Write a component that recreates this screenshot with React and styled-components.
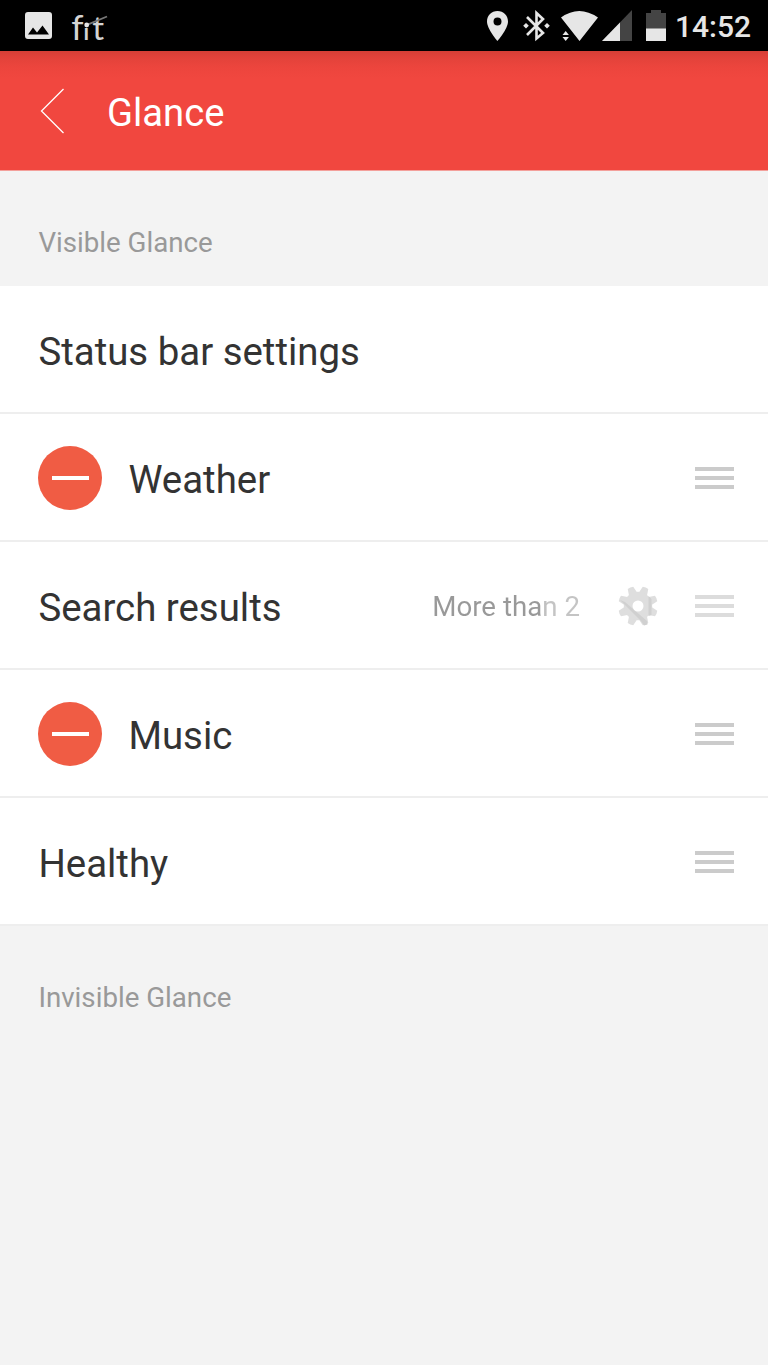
import React from "react";
import styled, { createGlobalStyle } from "styled-components";

const GlobalStyle = createGlobalStyle`
  body { margin: 0; background: #f3f3f3; font-family: Roboto, "Liberation Sans", sans-serif; }
  svg { display: block; flex: none; }
`;

const Screen = styled.main`
  min-height: 1365px;
  background: #f3f3f3;
`;

const StatusBar = styled.header`
  display: flex;
  align-items: center;
  justify-content: space-between;
  height: 51px;
  background: #000;
`;

const Clock = styled.time`
  width: 75px;
  padding-top: 1px;
  margin-left: 8px;
  margin-right: 18px;
  font-size: 30px;
  font-weight: 500;
  line-height: 51px;
  color: #e6e6e6;
  white-space: nowrap;
`;

const StatusGroup = styled.div`
  display: flex;
`;

const TitleBar = styled.div`
  display: flex;
  align-items: center;
  height: 120px;
  padding-left: 38px;
  background: linear-gradient(#d63f36 0, #e2423a 6px, #ec453d 16px, #f1473f 28px);
  border-bottom: 1px solid #f3a09b;
  box-sizing: border-box;
`;

const Title = styled.h1`
  margin: 5px 0 0 41px;
  font-size: 38.2px;
  font-weight: 400;
  line-height: 45px;
  color: #fff;
`;

const SectionLabel = styled.h2`
  margin: 0;
  padding: ${(p) => p.$top}px 38.4px 0;
  height: ${(p) => p.$height}px;
  box-sizing: border-box;
  font-size: 27.7px;
  font-weight: 400;
  line-height: 34px;
  color: #999;
`;

const List = styled.ul`
  margin: 0;
  padding: 0;
  list-style: none;
`;

const Row = styled.li`
  display: flex;
  align-items: center;
  height: 128px;
  padding: 2px 34px 0 38.4px;
  box-sizing: border-box;
  background: #fff;
  border-bottom: 2px solid #eee;
`;

const RowLabel = styled.span`
  flex: 1;
  padding-top: 3px;
  font-size: 38.4px;
  line-height: 46px;
  color: #333;
`;

const RemoveButton = styled.span`
  display: flex;
  align-items: center;
  justify-content: center;
  width: 64px;
  height: 64px;
  margin-right: 26px;
  border-radius: 50%;
  background: #f05c44;

  &::before {
    content: "";
    width: 37px;
    height: 4px;
    background: #fff;
  }
`;

const RowValue = styled.span`
  padding-top: 2px;
  margin-right: 38px;
  font-size: 27.7px;
  line-height: 34px;
  color: transparent;
  background: linear-gradient(90deg, #999 0 108px, #c4c4c4 114px);
  background-clip: text;
`;

const Handle = styled.span`
  display: grid;
  gap: 5px;
  width: 39px;
  margin-left: ${(p) => (p.$afterIcon ? 37 : 0)}px;

  i {
    height: 4px;
    background: ${(p) => (p.$faded ? "#dcdcdc" : "#cbcbcb")};
  }
`;

const DragHandle = (props) => (
  <Handle {...props}><i /><i /><i /></Handle>
);

const NotificationIcons = () => (
  <svg width="120" height="51" viewBox="0 0 120 51">
    <path fill="#e6e6e6" fillRule="evenodd" d="M28 12h21a3 3 0 0 1 3 3v21a3 3 0 0 1-3 3H28a3 3 0 0 1-3-3V15a3 3 0 0 1 3-3Zm0 22.500h21l-6.500-9-5.500 7-4-5Z" />
    <g fontFamily="Lato, sans-serif" fill="#d4d4d4">
      <text x="71.300" y="39.800" fontSize="35">f</text>
      <text x="83.500" y="39.800" fontSize="22" fontWeight="700">ı</text>
      <text x="92.300" y="39.800" fontSize="33">t</text>
    </g>
    <path d="M87 24.800L107 16.500" stroke="#777" strokeWidth="1.800" />
    <circle cx="86.700" cy="25" r="2.400" fill="#e6e6e6" />
  </svg>
);

const SystemIcons = () => (
  <svg width="182" height="51" viewBox="485 0 182 51">
    <path fill="#e6e6e6" fillRule="evenodd" d="M497.500 11C491.500 11 487 15.600 487 21.500C487 29 497.500 41 497.500 41S508 29 508 21.500C508 15.600 503.500 11 497.500 11Zm0 6.500a4 4 0 1 1 0 8a4 4 0 1 1 0-8Z" />
    <path fill="none" stroke="#e6e6e6" strokeWidth="2.600" d="M527 17L543 33L536.500 38.500V13L543 19L527 35" />
    <path fill="#e6e6e6" d="M526 23l2.800 2.800-2.800 2.800-2.800-2.800ZM547 23l2.800 2.800-2.800 2.800-2.800-2.800Z" />
    <path fill="#e6e6e6" d="M561 17.500Q579 4.500 598 17.500L579.500 41ZM562.500 35l3.200-4 3.200 4ZM562.500 37l3.200 4 3.200-4Z" />
    <path fill="#444" d="M632 10V41H602Z" />
    <path fill="#e6e6e6" d="M620 22.500V41H602Z" />
    <path fill="#444" d="M646 13h5v-3h10v3h5v16h-20Z" />
    <path fill="#e6e6e6" d="M646 28.500h20V41h-20Z" />
  </svg>
);

const BackIcon = () => (
  <svg width="28" height="48" viewBox="0 0 28 48">
    <path d="M25.500 2L3.500 24L25.500 46" fill="none" stroke="#fff" strokeWidth="1.300" />
  </svg>
);

const teeth = [0, 45, 90, 135, 180, 225, 270, 315];

const GearIcon = () => (
  <svg width="40" height="40" viewBox="-20 -20 40 40">
    <g fill="#dedede">
      {teeth.map((a) => (
        <path key={a} transform={`rotate(${a + 22.5})`} d="M-4.500-12L-3-19.600Q0-20.500 3-19.600L4.500-12Z" />
      ))}
      <circle r="14.200" />
    </g>
    <path d="M-18-6L-13-4L9 15L9.500 18.500L6 19.500L3 15Z" fill="#d0d0d0" />
    <path d="M10.500-10L13.500-7V9L10.500 10Z" fill="#d0d0d0" />
    <circle r="5.500" fill="#fff" />
  </svg>
);

export default function App() {
  return (
    <Screen>
      <GlobalStyle />
      <StatusBar>
        <NotificationIcons />
        <StatusGroup>
          <SystemIcons />
          <Clock>14:52</Clock>
        </StatusGroup>
      </StatusBar>
      <TitleBar>
        <BackIcon />
        <Title>Glance</Title>
      </TitleBar>
      <SectionLabel $top={55} $height={115}>Visible Glance</SectionLabel>
      <List>
        <Row><RowLabel>Status bar settings</RowLabel></Row>
        <Row><RemoveButton /><RowLabel>Weather</RowLabel><DragHandle /></Row>
        <Row>
          <RowLabel>Search results</RowLabel>
          <RowValue>More than 2</RowValue>
          <GearIcon />
          <DragHandle $afterIcon $faded />
        </Row>
        <Row><RemoveButton /><RowLabel>Music</RowLabel><DragHandle /></Row>
        <Row><RowLabel>Healthy</RowLabel><DragHandle /></Row>
      </List>
      <SectionLabel $top={55} $height={116}>Invisible Glance</SectionLabel>
    </Screen>
  );
}
